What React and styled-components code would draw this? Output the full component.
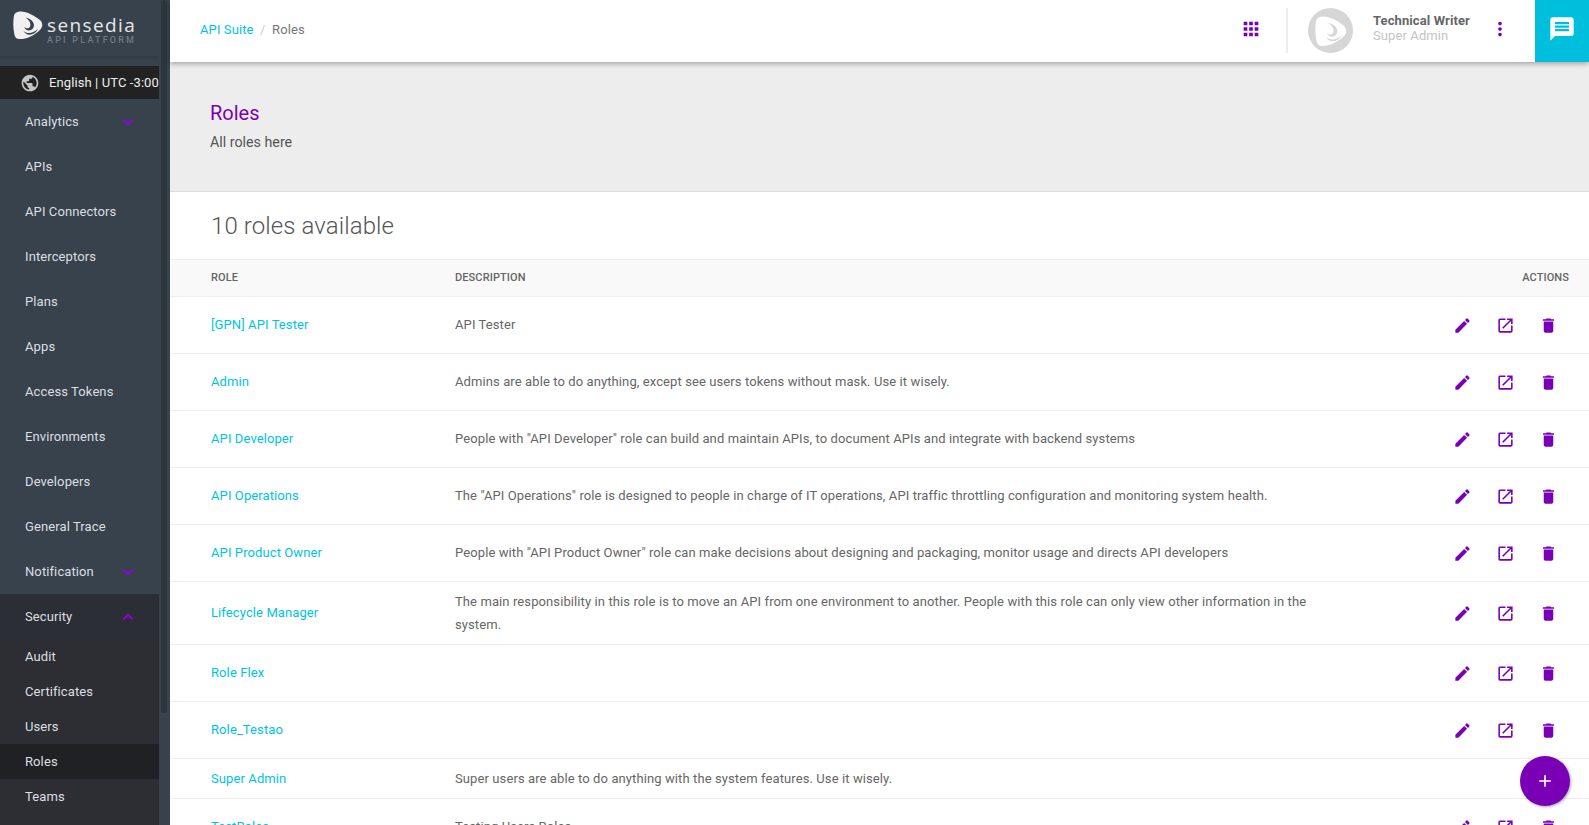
import React from 'react'
import styled, { createGlobalStyle } from 'styled-components'
import { MdEdit, MdOpenInNew, MdDelete, MdApps, MdMoreVert, MdMessage, MdAdd, MdPublic, MdKeyboardArrowDown, MdKeyboardArrowUp } from 'react-icons/md'

const GlobalStyle = createGlobalStyle`
  html, body { margin: 0; padding: 0; height: 100%; overflow: hidden; }
  body { font-family: Roboto, "Liberation Sans", sans-serif; color: #666; letter-spacing: 0.1px; }
  * { box-sizing: border-box; }
`

const Shell = styled.div`
  display: flex;
  height: 100vh;
  overflow: hidden;
`
const Sidebar = styled.aside`
  position: relative;
  flex: 0 0 170px;
  background: #37424c;
  padding-right: 11px;
  overflow: hidden;
`
const Track = styled.div`
  position: absolute;
  top: 0;
  right: 0;
  width: 11px;
  height: 100%;
  background: #37424c;
  &::after {
    content: "";
    position: absolute;
    left: 2px;
    top: 0;
    width: 6px;
    height: 713px;
    border-radius: 3px;
    background: #2b353e;
  }
`
const Brand = styled.div`
  display: flex;
  align-items: center;
  gap: 4px;
  height: 56px;
  padding: 0 0 6px 13px;
  box-shadow: 0 2px 3px rgba(0, 0, 0, 0.12);
`
const BrandText = styled.div`
  display: flex;
  flex-direction: column;
  padding-top: 10px;
`
const BrandName = styled.span`
  font-family: "Open Sans", sans-serif;
  font-size: 19px;
  line-height: 20px;
  letter-spacing: 1.4px;
  color: #e9e9e9;
`
const BrandSub = styled.span`
  font-size: 9px;
  line-height: 10px;
  font-weight: 500;
  letter-spacing: 2.2px;
  color: #6f7a84;
`
const Lang = styled.div`
  display: flex;
  align-items: center;
  gap: 9px;
  height: 33px;
  margin-top: 10px;
  padding-left: 20px;
  background: #222;
  color: #eee;
  font-size: 13px;
  white-space: nowrap;
  svg { color: #c4c4c4; flex: none; }
`
const Item = styled.div`
  display: flex;
  align-items: center;
  justify-content: space-between;
  height: 45px;
  padding: 0 20px 0 25px;
  font-size: 13px;
  color: #dcdfe2;
  background: ${p => (p.$open ? '#2b2e34' : 'transparent')};
  svg { color: #9000e0; }
`
const SubMenu = styled.div`
  background: #2d2e33;
  padding-bottom: 40px;
`
const SubItem = styled.div`
  display: flex;
  align-items: center;
  height: 35px;
  padding-left: 25px;
  font-size: 13px;
  color: #dcdfe2;
  background: ${p => (p.$active ? '#202124' : 'transparent')};
`
const Main = styled.main`
  flex: 1;
  min-width: 0;
  display: flex;
  flex-direction: column;
  background: #fff;
`
const Topbar = styled.header`
  position: relative;
  z-index: 2;
  flex: 0 0 62px;
  display: flex;
  align-items: center;
  background: #fff;
  box-shadow: 0 2px 5px rgba(0, 0, 0, 0.3);
`
const Crumbs = styled.nav`
  flex: 1;
  display: flex;
  gap: 6.5px;
  padding: 0 0 4px 30px;
  font-size: 13px;
  color: #777;
  a { color: #00c4de; }
  i { font-style: normal; color: #ccc; }
`
const GridButton = styled.div`
  display: flex;
  color: #7a00b5;
  margin: 0 24px 5px 0;
`
const Divider = styled.div`
  width: 2px;
  height: 45px;
  margin-bottom: 1px;
  background: #eee;
`
const Avatar = styled.div`
  width: 45px;
  height: 45px;
  margin: 0 20px 1px;
  border-radius: 50%;
  background: #d6d6d6;
  display: flex;
  align-items: center;
  justify-content: center;
`
const User = styled.div`
  width: 119px;
  margin-bottom: 6px;
  font-size: 13px;
  line-height: 15px;
  strong { display: block; font-weight: 700; color: #666; }
  span { color: #c4c4c4; }
`
const MoreButton = styled.div`
  display: flex;
  color: #7a00b5;
  margin: 0 27px 5px 0;
  svg { margin: 0 -3px; }
`
const ChatButton = styled.div`
  width: 54px;
  height: 62px;
  padding-bottom: 5px;
  background: #00bfdc;
  color: #fff;
  display: flex;
  align-items: center;
  justify-content: center;
`
const Scroller = styled.div`
  flex: 1;
  overflow: hidden;
`
const PageHead = styled.section`
  height: 130px;
  padding: 40px 40px 0;
  background: #ededed;
  border-bottom: 1px solid #ddd;
`
const PageTitle = styled.h1`
  margin: 0;
  font-size: 20px;
  line-height: 22px;
  font-weight: 400;
  letter-spacing: 0;
  color: #7a00b5;
`
const PageSub = styled.p`
  margin: 8px 0 0;
  font-size: 14.25px;
  line-height: 20px;
  letter-spacing: 0;
  color: #555;
`
const Count = styled.h2`
  margin: 0;
  height: 67px;
  padding: 19px 0 0 41px;
  font-size: 24px;
  line-height: 30px;
  font-weight: 300;
  color: #555;
`
const Table = styled.div`
  display: flex;
  flex-direction: column;
`
const Head = styled.div`
  display: grid;
  grid-template-columns: 244px 1fr 100px;
  align-items: center;
  height: 38px;
  padding: 0 20px 2px 41px;
  background: #f9f9f9;
  border-top: 1px solid #eee;
  border-bottom: 1px solid #eee;
  font-size: 11px;
  font-weight: 500;
  color: #666;
  span:last-child { text-align: right; }
`
const Row = styled.div`
  display: grid;
  grid-template-columns: 244px 1fr 129px;
  align-items: center;
  height: ${p => p.$h}px;
  padding: 0 7px 0 41px;
  border-bottom: 1px solid #eee;
  font-size: 13px;
`
const RoleLink = styled.a`
  margin-bottom: ${p => (p.$flush ? 0 : 2)}px;
  color: #00c4de;
`
const Desc = styled.div`
  max-width: 860px;
  margin-bottom: ${p => (p.$flush ? 0 : 2)}px;
  line-height: 23px;
  color: #666;
`
const Actions = styled.div`
  display: grid;
  grid-template-columns: repeat(3, 43px);
  color: #7a00b5;
  svg { display: block; }
`
const Fab = styled.button`
  position: fixed;
  right: 19px;
  bottom: 19px;
  width: 50px;
  height: 50px;
  border: 0;
  border-radius: 50%;
  background: #7a00b5;
  color: #fff;
  display: flex;
  align-items: center;
  justify-content: center;
  box-shadow: 1px 1px 3px rgba(0, 0, 0, 0.35);
`

const Mark = ({ size, fill, cut }) => (
  <svg width={size} height={size} viewBox="0 0 32 32">
    <path fill={fill} d="M5 2C12 0 22 5 29 11c3 3 3 7 0 10-6 6-14 10-22 10-3 0-5-2-5.500-5C0 19 0 12 1 6c.3-2 2-3.500 4-4z" />
    <path fill={cut} d="M13 8C20 9 25 15 21 20C18 23 13 22 12 18C14 20 17 20 18 18C20 15 17 10 13 8z" />
    <path fill={cut} d="M11 22C15 26 22 25 27 20C23 27 15 29 11 22z" />
  </svg>
)

const menu = ['APIs', 'API Connectors', 'Interceptors', 'Plans', 'Apps', 'Access Tokens', 'Environments', 'Developers', 'General Trace']
const subMenu = ['Audit', 'Certificates', 'Users', 'Roles', 'Teams']
const roles = [
  { name: '[GPN] API Tester', desc: 'API Tester', h: 57 },
  { name: 'Admin', desc: 'Admins are able to do anything, except see users tokens without mask. Use it wisely.', h: 57 },
  { name: 'API Developer', desc: 'People with "API Developer" role can build and maintain APIs, to document APIs and integrate with backend systems', h: 57 },
  { name: 'API Operations', desc: 'The "API Operations" role is designed to people in charge of IT operations, API traffic throttling configuration and monitoring system health.', h: 57 },
  { name: 'API Product Owner', desc: 'People with "API Product Owner" role can make decisions about designing and packaging, monitor usage and directs API developers', h: 57 },
  { name: 'Lifecycle Manager', desc: 'The main responsibility in this role is to move an API from one environment to another. People with this role can only view other information in the system.', h: 63, flushDesc: true },
  { name: 'Role Flex', desc: '', h: 57 },
  { name: 'Role_Testao', desc: '', h: 57 },
  { name: 'Super Admin', desc: 'Super users are able to do anything with the system features. Use it wisely.', h: 40, locked: true, flushDesc: true },
  { name: 'TestRoles', desc: 'Testing Users Roles', h: 57 },
]

const App = () => {
  return (
    <Shell>
      <GlobalStyle />
      <Sidebar>
        <Track />
        <Brand>
          <Mark size={30} fill="#f1f1f1" cut="#37424c" />
          <BrandText>
            <BrandName>sensedia</BrandName>
            <BrandSub>API PLATFORM</BrandSub>
          </BrandText>
        </Brand>
        <Lang><MdPublic size={20} />English | UTC -3:00</Lang>
        <Item>Analytics<MdKeyboardArrowDown size={22} /></Item>
        {menu.map(m => <Item key={m}>{m}</Item>)}
        <Item>Notification<MdKeyboardArrowDown size={22} /></Item>
        <Item $open>Security<MdKeyboardArrowUp size={22} /></Item>
        <SubMenu>
          {subMenu.map(s => <SubItem key={s} $active={s === 'Roles'}>{s}</SubItem>)}
        </SubMenu>
      </Sidebar>
      <Main>
        <Topbar>
          <Crumbs><a>API Suite</a><i>/</i><span>Roles</span></Crumbs>
          <GridButton><MdApps size={22} /></GridButton>
          <Divider />
          <Avatar><Mark size={32} fill="#fff" cut="#d6d6d6" /></Avatar>
          <User><strong>Technical Writer</strong><span>Super Admin</span></User>
          <MoreButton><MdMoreVert size={22} /></MoreButton>
          <ChatButton><MdMessage size={28} /></ChatButton>
        </Topbar>
        <Scroller>
          <PageHead>
            <PageTitle>Roles</PageTitle>
            <PageSub>All roles here</PageSub>
          </PageHead>
          <Count>10 roles available</Count>
          <Table>
            <Head><span>ROLE</span><span>DESCRIPTION</span><span>ACTIONS</span></Head>
            {roles.map(r => (
              <Row key={r.name} $h={r.h}>
                <RoleLink $flush={r.locked}>{r.name}</RoleLink>
                <Desc $flush={r.flushDesc}>{r.desc}</Desc>
                {!r.locked && (
                  <Actions>
                    <MdEdit size={19} />
                    <MdOpenInNew size={19} />
                    <MdDelete size={19} />
                  </Actions>
                )}
              </Row>
            ))}
          </Table>
        </Scroller>
      </Main>
      <Fab><MdAdd size={20} /></Fab>
    </Shell>
  )
}

export default App
